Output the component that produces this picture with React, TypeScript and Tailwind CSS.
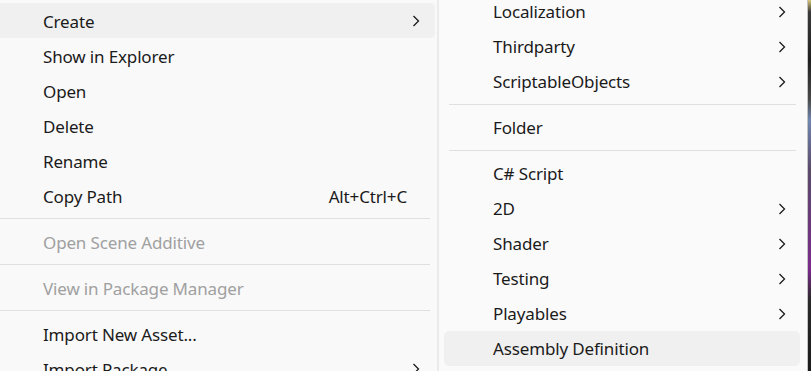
import React from "react";

type Item =
  | { kind: "item"; label: string; sub?: boolean; shortcut?: string; disabled?: boolean; active?: boolean }
  | { kind: "sep" };

const leftItems: Item[] = [
  { kind: "item", label: "Create", sub: true, active: true },
  { kind: "item", label: "Show in Explorer" },
  { kind: "item", label: "Open" },
  { kind: "item", label: "Delete" },
  { kind: "item", label: "Rename" },
  { kind: "item", label: "Copy Path", shortcut: "Alt+Ctrl+C" },
  { kind: "sep" },
  { kind: "item", label: "Open Scene Additive", disabled: true },
  { kind: "sep" },
  { kind: "item", label: "View in Package Manager", disabled: true },
  { kind: "sep" },
  { kind: "item", label: "Import New Asset..." },
  { kind: "item", label: "Import Package", sub: true },
];

const rightItems: Item[] = [
  { kind: "item", label: "Localization", sub: true },
  { kind: "item", label: "Thirdparty", sub: true },
  { kind: "item", label: "ScriptableObjects", sub: true },
  { kind: "sep" },
  { kind: "item", label: "Folder" },
  { kind: "sep" },
  { kind: "item", label: "C# Script" },
  { kind: "item", label: "2D", sub: true },
  { kind: "item", label: "Shader", sub: true },
  { kind: "item", label: "Testing", sub: true },
  { kind: "item", label: "Playables", sub: true },
  { kind: "item", label: "Assembly Definition", active: true },
];

function Chevron() {
  return (
    <svg width="8" height="12" viewBox="0 0 8 12" className="shrink-0">
      <path d="M1.5 1 L6.5 6 L1.5 11" fill="none" stroke="#1b1b1b" strokeWidth="1.3" strokeLinejoin="miter" />
    </svg>
  );
}

function LeftMenu() {
  return (
    <div className="w-[437px] shrink-0 bg-[#f9f9f9] pt-[3px] pr-[2px]">
      {leftItems.map((it, i) =>
        it.kind === "sep" ? (
          <div key={i} className="py-[5px] pr-[5px]">
            <div className="h-px bg-[#e0e0e0]" />
          </div>
        ) : (
          <div
            key={i}
            className={`flex h-[35px] items-center pl-[43px] pr-[15px] rounded-r-[5px] ${it.active ? "bg-[#f0f0f0]" : ""}`}
          >
            <span className={`flex-1 whitespace-nowrap pt-px ${it.disabled ? "text-[#a0a0a0]" : "text-[#1b1b1b]"}`}>{it.label}</span>
            {it.shortcut && <span className="mr-[13px] pt-px text-[#1b1b1b]">{it.shortcut}</span>}
            {it.sub && <Chevron />}
          </div>
        )
      )}
    </div>
  );
}

function RightMenu() {
  return (
    <div className="flex-1 overflow-hidden bg-[#fafafa] pl-[5px] pr-[7px]">
      <div className="mt-[-6px]">
        {rightItems.map((it, i) =>
          it.kind === "sep" ? (
            <div key={i} className="py-[5px] pl-[5px] pr-[4px]">
              <div className="h-px bg-[#e0e0e0]" />
            </div>
          ) : (
            <div
              key={i}
              className={`flex h-[35px] items-center pl-[49px] pr-[14px] rounded-[5px] ${it.active ? "bg-[#f0f0f0]" : ""}`}
            >
              <span className="flex-1 whitespace-nowrap text-[#1b1b1b]">{it.label}</span>
              {it.sub && <Chevron />}
            </div>
          )
        )}
      </div>
    </div>
  );
}

export default function App() {
  return (
    <div
      className="flex h-[371px] w-[811px] overflow-hidden bg-[#f9f9f9] text-[17px] leading-none tracking-[-0.15px]"
      style={{ fontFamily: '"Noto Sans", "Open Sans", sans-serif' }}
    >
      <LeftMenu />
      <div className="w-[2px] shrink-0 bg-[#ebebeb]" />
      <RightMenu />
      <div className="w-px shrink-0 bg-[#c4c4c4]" />
      <div className="w-[3px] shrink-0 bg-[linear-gradient(to_bottom,#d8c77a_0px,#3a3a3a_12px,#1e1e1e_60px,#4a4a4a_100px,#6f86b0_120px,#5a4a6a_170px,#7a2a8a_270px,#2a2a2a_300px,#1a1a1a_371px)]" />
    </div>
  );
}
